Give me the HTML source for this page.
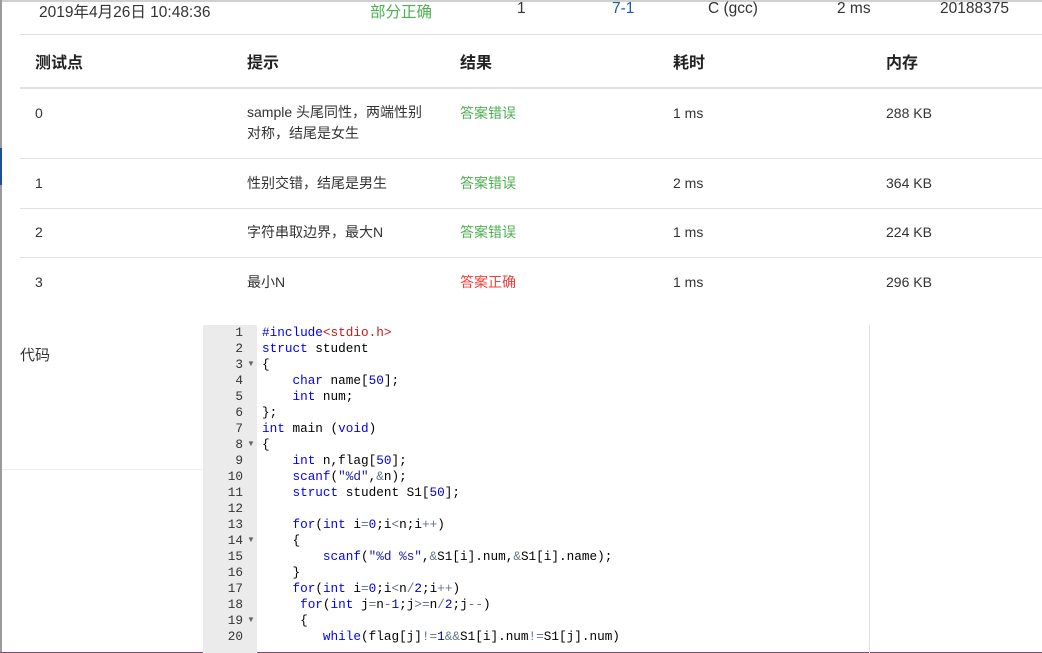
<!DOCTYPE html>
<html><head><meta charset="utf-8"><style>
*{margin:0;padding:0;box-sizing:border-box}
body{width:1042px;height:653px;overflow:hidden;background:#fff;position:relative;font-family:"Liberation Sans","Noto Sans CJK SC",sans-serif;color:#333;font-size:14px}
.a{position:absolute;white-space:nowrap}
.h{font-weight:bold;font-size:16px;color:#222}
.hl{position:absolute;left:20px;width:1022px;height:1px;background:#dde1e6}
.t{font-size:15.5px}
.c{font-size:14px}
.g{color:#4caf50}.r{color:#f0413a}
.code{position:absolute;left:262px;top:325px;font-family:"Liberation Mono",monospace;font-size:12.7px;line-height:16px;color:#000;white-space:pre}
.gut{position:absolute;left:203px;top:325px;width:54px;height:328px;background:#ebebeb}
.ln{position:absolute;left:203px;top:325px;width:40px;font-family:"Liberation Mono",monospace;font-size:12.7px;line-height:16px;text-align:right;color:#333;white-space:pre}
.k{color:#0000ff}.n{color:#0000cd}.s{color:#1a1aa6}.i{color:#c41a16}.o{color:#687687}
.fold{position:absolute;left:247px;font-size:8px;color:#666}
</style></head><body>
<div style="position:absolute;left:0;top:0;width:1042px;height:2px;background:#d0d0d0"></div>
<div style="position:absolute;left:0;top:0;width:2px;height:653px;background:#9a9a9a"></div>
<div style="position:absolute;left:0;top:148px;width:2px;height:37px;background:#1e4f8f"></div>
<div style="position:absolute;left:0;top:652px;width:1042px;height:1px;background:#7a4a70"></div>

<div class="a t" style="left:39px;top:0px">2019年4月26日 10:48:36</div>
<div class="a g t" style="left:370px;top:0px">部分正确</div>
<div class="a t" style="left:517px;top:0px">1</div>
<div class="a t" style="left:612px;top:0px;color:#1e5ba8">7-1</div>
<div class="a t" style="left:708px;top:0px">C (gcc)</div>
<div class="a t" style="left:837px;top:0px">2 ms</div>
<div class="a t" style="left:940px;top:0px">20188375</div>

<div class="hl" style="top:34px"></div>
<div class="a h" style="left:35px;top:49px">测试点</div>
<div class="a h" style="left:247px;top:49px">提示</div>
<div class="a h" style="left:460px;top:49px">结果</div>
<div class="a h" style="left:673px;top:49px">耗时</div>
<div class="a h" style="left:886px;top:49px">内存</div>
<div class="hl" style="top:87px;height:2px"></div>

<div class="a" style="left:35px;top:105px">0</div>
<div class="a c" style="left:247px;top:102px;line-height:21px">sample 头尾同性，两端性别<br>对称，结尾是女生</div>
<div class="a g c" style="left:460px;top:103px">答案错误</div>
<div class="a" style="left:673px;top:105px">1 ms</div>
<div class="a" style="left:886px;top:105px">288 KB</div>
<div class="hl" style="top:158px"></div>

<div class="a" style="left:35px;top:175px">1</div>
<div class="a c" style="left:247px;top:173px">性别交错，结尾是男生</div>
<div class="a g c" style="left:460px;top:173px">答案错误</div>
<div class="a" style="left:673px;top:175px">2 ms</div>
<div class="a" style="left:886px;top:175px">364 KB</div>
<div class="hl" style="top:208px"></div>

<div class="a" style="left:35px;top:224px">2</div>
<div class="a c" style="left:247px;top:222px">字符串取边界，最大N</div>
<div class="a g c" style="left:460px;top:222px">答案错误</div>
<div class="a" style="left:673px;top:224px">1 ms</div>
<div class="a" style="left:886px;top:224px">224 KB</div>
<div class="hl" style="top:257px"></div>

<div class="a" style="left:35px;top:274px">3</div>
<div class="a c" style="left:247px;top:272px">最小N</div>
<div class="a r c" style="left:460px;top:272px">答案正确</div>
<div class="a" style="left:673px;top:274px">1 ms</div>
<div class="a" style="left:886px;top:274px">296 KB</div>

<div class="a" style="left:20px;top:344px;font-size:15px">代码</div>
<div style="position:absolute;left:2px;top:469px;width:201px;height:1px;background:#eee"></div>
<div style="position:absolute;left:869px;top:325px;width:1px;height:328px;background:#e3e3e3"></div>

<div class="gut"></div>
<div class="ln">1
2
3
4
5
6
7
8
9
10
11
12
13
14
15
16
17
18
19
20</div>
<div class="fold" style="top:359px">▼</div>
<div class="fold" style="top:439px">▼</div>
<div class="fold" style="top:535px">▼</div>
<div class="fold" style="top:615px">▼</div>
<div class="code"><span class="k">#include</span><span class="i">&lt;stdio.h&gt;</span>
<span class="k">struct</span> student
{
    <span class="k">char</span> name[<span class="n">50</span>];
    <span class="k">int</span> num;
};
<span class="k">int</span> main (<span class="k">void</span>)
{
    <span class="k">int</span> n,flag[<span class="n">50</span>];
    <span class="k">scanf</span>(<span class="s">"%d"</span>,<span class="o">&amp;</span>n);
    <span class="k">struct</span> student S1[<span class="n">50</span>];

    <span class="k">for</span>(<span class="k">int</span> i<span class="o">=</span><span class="n">0</span>;i<span class="o">&lt;</span>n;i<span class="o">++</span>)
    {
        <span class="k">scanf</span>(<span class="s">"%d %s"</span>,<span class="o">&amp;</span>S1[i].num,<span class="o">&amp;</span>S1[i].name);
    }
    <span class="k">for</span>(<span class="k">int</span> i<span class="o">=</span><span class="n">0</span>;i<span class="o">&lt;</span>n<span class="o">/</span><span class="n">2</span>;i<span class="o">++</span>)
     <span class="k">for</span>(<span class="k">int</span> j<span class="o">=</span>n<span class="o">-</span><span class="n">1</span>;j<span class="o">&gt;=</span>n<span class="o">/</span><span class="n">2</span>;j<span class="o">--</span>)
     {
        <span class="k">while</span>(flag[j]<span class="o">!=</span><span class="n">1</span><span class="o">&amp;&amp;</span>S1[i].num<span class="o">!=</span>S1[j].num)</div>
</body></html>
